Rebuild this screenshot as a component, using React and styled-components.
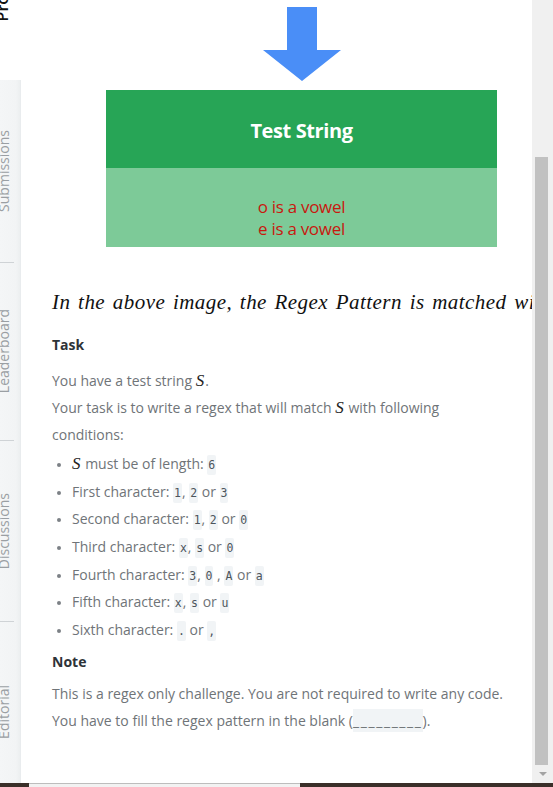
import React from 'react';
import styled, { createGlobalStyle } from 'styled-components';

const Global = createGlobalStyle`
  html, body {
    margin: 0;
    padding: 0;
    background: #fff;
    overflow: hidden;
  }
  * { box-sizing: border-box; }
`;

const Page = styled.div`
  width: 553px;
  height: 787px;
  display: flex;
  flex-direction: column;
  font-family: "Open Sans", "Liberation Sans", sans-serif;
  overflow: hidden;
`;

const Main = styled.div`
  flex: 1;
  display: flex;
  min-height: 0;
`;

const Sidebar = styled.nav`
  width: 21px;
  flex: none;
  display: flex;
  flex-direction: column;
  overflow: hidden;
`;

const SideTop = styled.div`
  height: 80px;
  flex: none;
  background: #fff;
`;

const ProWrap = styled.div`
  height: 21px;
  display: flex;
  flex-direction: column;
  justify-content: flex-end;
`;

const Vertical = styled.span`
  writing-mode: vertical-rl;
  transform: rotate(180deg);
  white-space: nowrap;
`;

const ProLabel = styled(Vertical)`
  font-size: 16px;
  line-height: 20px;
  font-weight: 600;
  color: #111;
  margin-left: -8px;
`;

const Tabs = styled.div`
  flex: 1;
  display: flex;
  flex-direction: column;
  background: linear-gradient(90deg, #f4f6f7 0%, #f2f4f5 80%, #eceff0 100%);
  border-right: 1px solid #e9ecee;
`;

const Tab = styled.div`
  height: ${p => p.$h}px;
  flex: none;
  display: flex;
  align-items: center;
`;

const TabRule = styled.hr`
  margin: 0;
  border: none;
  height: 1px;
  width: 14px;
  background: #cfd3d6;
`;

const TabLabel = styled(Vertical)`
  font-size: 14px;
  line-height: 20px;
  color: #9a9fa3;
  margin-left: -6px;
`;

const Content = styled.div`
  flex: 1;
  min-width: 0;
  overflow: hidden;
  background: #fff;
`;

const Article = styled.article`
  width: 530px;
  padding-left: 31px;
`;

const Figure = styled.figure`
  margin: 0;
  width: 499px;
  display: flex;
  flex-direction: column;
  align-items: center;
`;

const ArrowBox = styled.div`
  height: 90px;
  display: flex;
  justify-content: center;
  padding-top: 7px;
`;

const Panel = styled.div`
  width: 391px;
  height: ${p => p.$h}px;
  background: ${p => p.$bg};
  display: flex;
  flex-direction: column;
  align-items: center;
  justify-content: center;
  font-family: "Open Sans", "Liberation Sans", sans-serif;
`;

const PanelTitle = styled.div`
  color: #fff;
  font-size: 20px;
  font-weight: 700;
  letter-spacing: -0.4px;
  margin-top: 2px;
`;

const Vowels = styled.div`
  color: #c8180f;
  font-size: 17px;
  line-height: 22px;
  text-align: center;
  margin-top: 20px;
  letter-spacing: -0.3px;
`;

const MathLine = styled.div`
  margin-top: 40px;
  height: 30px;
  line-height: 30px;
  white-space: nowrap;
  font-family: "Liberation Serif", "DejaVu Serif", serif;
  font-style: italic;
  font-size: 21px;
  letter-spacing: 0.45px;
  word-spacing: 2px;
  color: #111;
`;

const Heading = styled.h3`
  margin: ${p => p.$mt}px 0 0;
  font-size: 14px;
  line-height: 20px;
  font-weight: 700;
  color: #2e3338;
`;

const Para = styled.p`
  margin: ${p => p.$mt || 0}px 0 0;
  font-size: 14px;
  line-height: 27px;
  color: #6f7478;
  width: ${p => p.$w || 420}px;
`;

const List = styled.ul`
  margin: 2.5px 0 0;
  padding-left: 20px;
  font-size: 14px;
  line-height: 27.7px;
  color: #6f7478;
  li { height: 27.7px; }
  li::marker { color: #7c8186; font-size: 12px; }
`;

const MathS = styled.span`
  font-family: "Liberation Serif", "DejaVu Serif", serif;
  font-style: italic;
  font-size: 17px;
  line-height: 1;
  color: #222;
  margin-right: 1px;
`;

const Code = styled.code`
  font-family: "DejaVu Sans Mono", "Liberation Mono", monospace;
  font-size: 11.5px;
  line-height: 1;
  color: #4d555c;
  background: #f1f4f6;
  padding: 3px 1px;
  border-radius: 2px;
`;

const Blank = styled.span`
  background: #f1f4f6;
  padding: 2px 0;
  letter-spacing: 1.6px;
`;

const Scrollbar = styled.div`
  width: 21px;
  flex: none;
  background: #f0f0f0;
  display: flex;
  flex-direction: column;
  align-items: center;
  padding-top: 157px;
`;

const Thumb = styled.div`
  width: 13px;
  margin-left: -2px;
  flex: 1;
  background: #c1c1c1;
`;

const ArrowDown = styled.div`
  height: 18px;
  display: flex;
  align-items: center;
  justify-content: center;
  &::after {
    content: '';
    border-left: 4px solid transparent;
    border-right: 4px solid transparent;
    border-top: 4px solid #a3a3a3;
  }
`;

const BottomBar = styled.div`
  height: 4px;
  flex: none;
  display: flex;
  background: #3a2f29;
`;

const BottomTab = styled.div`
  width: 271px;
  margin-left: 29px;
  background: #f2f2f2;
  border-top: 1px solid #bdbdbd;
`;

const tabs = [
  { label: 'Submissions', h: 182 },
  { label: 'Leaderboard', h: 178 },
  { label: 'Discussions', h: 181 },
  { label: 'Editorial', h: 180 },
];

function DownArrow() {
  return (
    <svg width="80" height="75" viewBox="0 0 80 75">
      <polygon points="25,0 55,0 55,43 79,43 40,74 1,43 25,43" fill="#4a8ef7" />
    </svg>
  );
}

const conditions = [
  [<MathS key="s">S</MathS>, ' must be of length: ', <Code key="a">6</Code>],
  ['First character: ', <Code key="a">1</Code>, ', ', <Code key="b">2</Code>, ' or ', <Code key="c">3</Code>],
  ['Second character: ', <Code key="a">1</Code>, ', ', <Code key="b">2</Code>, ' or ', <Code key="c">0</Code>],
  ['Third character: ', <Code key="a">x</Code>, ', ', <Code key="b">s</Code>, ' or ', <Code key="c">0</Code>],
  ['Fourth character: ', <Code key="a">3</Code>, ', ', <Code key="b">0</Code>, ' , ', <Code key="c">A</Code>, ' or ', <Code key="d">a</Code>],
  ['Fifth character: ', <Code key="a">x</Code>, ', ', <Code key="b">s</Code>, ' or ', <Code key="c">u</Code>],
  ['Sixth character: ', <Code key="a">.</Code>, ' or ', <Code key="b">,</Code>],
];

export default function App() {
  return (
    <Page>
      <Global />
      <Main>
        <Sidebar>
          <SideTop>
            <ProWrap>
              <ProLabel>Problem</ProLabel>
            </ProWrap>
          </SideTop>
          <Tabs>
            {tabs.map((t, i) => (
              <React.Fragment key={t.label}>
                {i > 0 && <TabRule />}
                <Tab $h={t.h - (i > 0 ? 1 : 0)}>
                  <TabLabel>{t.label}</TabLabel>
                </Tab>
              </React.Fragment>
            ))}
          </Tabs>
        </Sidebar>
        <Content>
          <Article>
            <Figure>
              <ArrowBox>
                <DownArrow />
              </ArrowBox>
              <Panel $h={78} $bg="#27a556">
                <PanelTitle>Test String</PanelTitle>
              </Panel>
              <Panel $h={79} $bg="#7dca98">
                <Vowels>
                  o is a vowel
                  <br />
                  e is a vowel
                </Vowels>
              </Panel>
            </Figure>
            <MathLine>In the above image, the Regex Pattern is matched with the Test String</MathLine>
            <Heading $mt={18}>Task</Heading>
            <Para $mt={11.5}>
              You have a test string <MathS>S</MathS>.
              <br />
              Your task is to write a regex that will match <MathS>S</MathS> with following conditions:
            </Para>
            <List>
              {conditions.map((c, i) => (
                <li key={i}>{c}</li>
              ))}
            </List>
            <Heading $mt={8}>Note</Heading>
            <Para $mt={8.5} $w={480}>
              This is a regex only challenge. You are not required to write any code.
              <br />
              You have to fill the regex pattern in the blank (<Blank>_________</Blank>).
            </Para>
          </Article>
        </Content>
        <Scrollbar>
          <Thumb />
          <ArrowDown />
        </Scrollbar>
      </Main>
      <BottomBar>
        <BottomTab />
      </BottomBar>
    </Page>
  );
}
